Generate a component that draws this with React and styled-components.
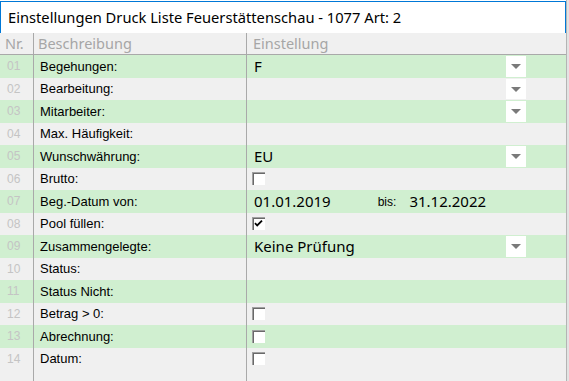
import React from "react";
import styled, { createGlobalStyle } from "styled-components";

const GlobalStyle = createGlobalStyle`
  html, body {
    margin: 0;
    padding: 0;
    background: #f0f0f0;
  }
  #root {
    width: 569px;
    height: 381px;
    overflow: hidden;
  }
`;

const Screen = styled.div`
  display: flex;
  width: 569px;
  height: 381px;
  background: #ffffff;
`;

const Window = styled.div`
  display: flex;
  flex-direction: column;
  width: 566px;
  height: 100%;
  padding-top: 1px;
  box-sizing: border-box;
`;

const Backdrop = styled.div`
  flex: 1;
  background: #e3e3e3;
  border-left: 1px solid #b4b4b4;
`;

const TitleBox = styled.div`
  display: flex;
  align-items: center;
  height: 32px;
  box-sizing: border-box;
  padding: 0 0 1px 7px;
  background: #ffffff;
  border: 1px solid #0078d7;
  border-bottom: none;
  font-family: "Noto Sans", sans-serif;
  font-size: 14.7px;
  color: #000000;
`;

const Table = styled.div`
  flex: 1;
  display: flex;
  flex-direction: column;
  background: #f0f0f0;
`;

const Row = styled.div`
  display: grid;
  grid-template-columns: 34px 213px 1fr;
  height: ${(p) => p.h || "22.5px"};
  flex: ${(p) => (p.fill ? 1 : "none")};
  background: ${(p) => (p.green ? "#d0efd0" : "#f0f0f0")};
  border-bottom: ${(p) => (p.head ? "1px solid #a9a9a9" : "none")};
`;

const Cell = styled.div`
  display: flex;
  align-items: center;
  min-width: 0;
  padding-left: ${(p) => p.pad || "6px"};
  border-right: ${(p) => (p.last ? "none" : "1px solid #a9a9a9")};
`;

const HeadText = styled.span`
  font-family: "Noto Sans", sans-serif;
  font-size: 14.5px;
  color: #a6a6a6;
  margin-top: -2px;
`;

const Num = styled.span`
  font-family: "Liberation Sans", sans-serif;
  font-size: 12px;
  color: #c4c4c4;
`;

const Label = styled.span`
  font-family: "Liberation Sans", sans-serif;
  font-size: 13px;
  color: #000000;
`;

const ValueCell = styled.div`
  display: flex;
  align-items: center;
  padding: 0 40px 0 7px;
  min-width: 0;
`;

const Value = styled.span`
  flex: 1;
  font-family: "Noto Sans", sans-serif;
  font-size: 15px;
  color: #000000;
`;

const DropButton = styled.div`
  display: flex;
  align-items: center;
  justify-content: center;
  width: 20px;
  height: calc(100% - 2px);
  background: #ffffff;
`;

const Arrow = styled.div`
  width: 0;
  height: 0;
  border-left: 5px solid transparent;
  border-right: 5px solid transparent;
  border-top: 5px solid #7a7a7a;
  margin-top: 1px;
`;

const Check = styled.div`
  position: relative;
  width: 13px;
  height: 13px;
  background: #ffffff;
  margin-left: -2px;
  box-shadow: inset 1px 1px 0 #a0a0a0, inset 2px 2px 0 #696969;
`;

const Mark = styled.svg`
  position: absolute;
  left: 2px;
  top: 2px;
`;

const Small = styled.span`
  font-family: "Liberation Sans", sans-serif;
  font-size: 12px;
  color: #000000;
  margin: 1px 13px 0 47px;
`;

const DateText = styled.span`
  font-family: "Noto Sans", sans-serif;
  font-size: 15px;
  color: #000000;
`;

const rows = [
  { label: "Begehungen:", value: "F", drop: true },
  { label: "Bearbeitung:", drop: true },
  { label: "Mitarbeiter:", drop: true },
  { label: "Max. Häufigkeit:" },
  { label: "Wunschwährung:", value: "EU", drop: true },
  { label: "Brutto:", check: "off" },
  { label: "Beg.-Datum von:", range: ["01.01.2019", "31.12.2022"] },
  { label: "Pool füllen:", check: "on" },
  { label: "Zusammengelegte:", value: "Keine Prüfung", drop: true },
  { label: "Status:" },
  { label: "Status Nicht:" },
  { label: "Betrag > 0:", check: "off" },
  { label: "Abrechnung:", check: "off" },
  { label: "Datum:", check: "off" },
];

function Setting({ row }) {
  if (row.check) {
    return (
      <ValueCell>
        <Check>
          {row.check === "on" && (
            <Mark width="9" height="9" viewBox="0 0 9 9">
              <path d="M1 4.2 L3.2 6.5 L8 1.6" fill="none" stroke="#000" strokeWidth="1.8" />
            </Mark>
          )}
        </Check>
      </ValueCell>
    );
  }
  if (row.range) {
    return (
      <ValueCell>
        <DateText>{row.range[0]}</DateText>
        <Small>bis:</Small>
        <DateText>{row.range[1]}</DateText>
      </ValueCell>
    );
  }
  return (
    <ValueCell>
      <Value>{row.value}</Value>
      {row.drop && (
        <DropButton>
          <Arrow />
        </DropButton>
      )}
    </ValueCell>
  );
}

export default function App() {
  return (
    <>
      <GlobalStyle />
      <Screen>
        <Window>
          <TitleBox>Einstellungen Druck Liste Feuerstättenschau - 1077 Art: 2</TitleBox>
          <Table>
            <Row head h="21px">
              <Cell pad="5px">
                <HeadText>Nr.</HeadText>
              </Cell>
              <Cell pad="4px">
                <HeadText>Beschreibung</HeadText>
              </Cell>
              <Cell last pad="6px">
                <HeadText>Einstellung</HeadText>
              </Cell>
            </Row>
            {rows.map((row, i) => (
              <Row key={i} green={i % 2 === 0}>
                <Cell pad="7px">
                  <Num>{String(i + 1).padStart(2, "0")}</Num>
                </Cell>
                <Cell>
                  <Label>{row.label}</Label>
                </Cell>
                <Setting row={row} />
              </Row>
            ))}
            <Row fill>
              <Cell />
              <Cell />
              <Cell last />
            </Row>
          </Table>
        </Window>
        <Backdrop />
      </Screen>
    </>
  );
}
